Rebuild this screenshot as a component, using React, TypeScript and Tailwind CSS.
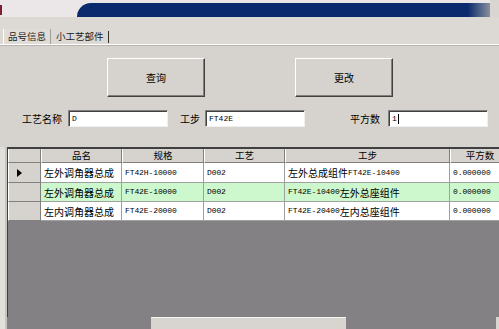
import React from "react";

const CJK = '"Noto Sans CJK SC", "Noto Sans", sans-serif';
const MONO = '"Liberation Mono", "Noto Sans CJK SC", monospace';

function Mix({ parts }: { parts: { t: string; m?: boolean }[] }) {
  return (
    <>
      {parts.map((p, i) =>
        p.m ? (
          <span key={i} className="text-[8px] tracking-[-0.1px]" style={{ fontFamily: MONO }}>
            {p.t}
          </span>
        ) : (
          <span key={i} className="text-[10px]" style={{ fontFamily: CJK }}>
            {p.t}
          </span>
        )
      )}
    </>
  );
}

const cols = "grid grid-cols-[33px_81px_82px_81px_165px_60px]";

type Row = { a: string; b: string; c: string; d: { t: string; m?: boolean }[]; e: string; green?: boolean; cur?: boolean };

const rows: Row[] = [
  { a: "左外调角器总成", b: "FT42H-10000", c: "D002", d: [{ t: "左外总成组件" }, { t: "FT42E-10400", m: true }], e: "0.000000", cur: true },
  { a: "左外调角器总成", b: "FT42E-10000", c: "D002", d: [{ t: "FT42E-10400", m: true }, { t: "左外总座组件" }], e: "0.000000", green: true },
  { a: "左内调角器总成", b: "FT42E-20000", c: "D002", d: [{ t: "FT42E-20400", m: true }, { t: "左内总座组件" }], e: "0.000000" },
];

function Button({ label }: { label: string }) {
  return (
    <div className="w-[98px] h-[39px] border border-t-white border-l-white border-b-[#404040] border-r-[#404040] shadow-[inset_-1px_-1px_0_#808080] bg-[#d6d3ce] flex items-center justify-center text-[10px] text-black" style={{ fontFamily: CJK }}>
      {label}
    </div>
  );
}

function Input({ w, value, cursor }: { w: string; value: string; cursor?: boolean }) {
  return (
    <div className={`${w} h-[17px] bg-white border border-t-[#808080] border-l-[#808080] border-b-[#f0f0f0] border-r-[#f0f0f0] shadow-[inset_1px_1px_0_#404040] flex items-center pl-[3px] text-[8px] text-black`} style={{ fontFamily: MONO }}>
      {value}
      {cursor && <span className="ml-[1px] w-px h-[10px] bg-black" />}
    </div>
  );
}

export default function App() {
  return (
    <div className="w-[499px] h-[329px] bg-[#d6d3ce] overflow-hidden flex flex-col" style={{ fontFamily: CJK }}>
      {/* title bar */}
      <div className="h-[17px] flex bg-[#ebe7e9] shrink-0">
        <div className="w-[77px] relative">
          <div className="absolute left-0 top-[5px] w-[2px] h-[10px] bg-[#7a2030]" />
        </div>
        <div className="mt-[3px] flex-1 bg-[#0b2a6e] rounded-tl-[16px]" />
        <div className="mt-[3px] w-[22px] bg-gradient-to-r from-[#0b2a6e] to-[#8b8f9c]" />
        <div className="w-[9px] bg-[#d9d6d2]" />
      </div>
      {/* tabs */}
      <div className="h-[28px] shrink-0 flex items-end bg-[#dcd9d4] border-b border-b-white shadow-[0_1px_0_#b8b5b0]">
        <div className="ml-[3px] h-[15px] pl-[4px] pr-[4px] flex items-center text-[9.5px] text-[#222] border-l border-l-white border-r border-r-[#a09d98] bg-[#e0ddd8]">
          品号信息
        </div>
        <div className="h-[15px] pl-[5px] pr-[3px] flex items-center text-[9.5px] text-[#222]">
          小工艺部件
          <span className="ml-[4px] w-px h-[12px] bg-[#303030]" />
        </div>
      </div>
      {/* buttons */}
      <div className="flex mt-[13px] shrink-0">
        <div className="ml-[107px]">
          <Button label="查询" />
        </div>
        <div className="ml-[90px]">
          <Button label="更改" />
        </div>
      </div>
      {/* inputs */}
      <div className="flex items-center mt-[13px] h-[17px] shrink-0 text-[10px] text-black">
        <span className="ml-[22px] w-[46px]">工艺名称</span>
        <Input w="w-[100px]" value="D" />
        <span className="ml-[12px] w-[25px]">工步</span>
        <Input w="w-[100px]" value="FT42E" />
        <span className="ml-[45px] w-[38px]">平方数</span>
        <Input w="w-[100px]" value="1" cursor />
      </div>
      {/* grid */}
      <div className="flex-1 flex mt-[20px] border-l-[5px] border-l-[#e2e0da]">
        <div className="w-[2px] bg-[#c8c5c0]" />
        <div className="flex-1 flex flex-col overflow-hidden">
          <div className="h-[170px] shrink-0 bg-[#838183] border-t-2 border-t-[#404040] border-l border-l-[#404040] overflow-hidden">
            <div className={`${cols} h-[14px] bg-[#d6d3ce] text-[9.5px] text-black`}>
              <div className="border-r border-r-[#808080] border-b border-b-[#808080] border-l border-l-white" />
              {["品名", "规格", "工艺", "工步", "平方数"].map((h) => (
                <div key={h} className="border-r border-r-[#808080] border-b border-b-[#808080] border-l border-l-white flex items-center justify-center leading-none">
                  {h}
                </div>
              ))}
            </div>
            {rows.map((r, i) => (
              <div key={i} className={`${cols} ${i === 0 ? "h-[20px]" : "h-[19px]"}`}>
                <div className="bg-[#d6d3ce] border-r border-r-[#808080] border-b border-b-[#808080] border-l border-l-white flex items-center pl-[8px]">
                  {r.cur && (
                    <svg width="5" height="8" viewBox="0 0 5 8">
                      <path d="M0 0 L5 4 L0 8 Z" fill="#000" />
                    </svg>
                  )}
                </div>
                {[
                  <Mix parts={[{ t: r.a }]} />,
                  <Mix parts={[{ t: r.b, m: true }]} />,
                  <Mix parts={[{ t: r.c, m: true }]} />,
                  <Mix parts={r.d} />,
                  <Mix parts={[{ t: r.e, m: true }]} />,
                ].map((c, j) => (
                  <div key={j} className={`${r.green ? "bg-[#cdf7cd]" : "bg-white"} border-r border-r-[#a0a0a0] border-b border-b-[#a0a0a0] flex items-center pl-[3px] text-black whitespace-nowrap overflow-hidden`}>
                    {c}
                  </div>
                ))}
              </div>
            ))}
          </div>
          <div className="flex-1 flex">
            <div className="w-[144px] bg-[#838183]" />
            <div className="w-[195px] bg-[#d8d5d0] border-t border-t-[#f4f4f0]" />
            <div className="w-[150px] bg-[#838183]" />
            <div className="flex-1 bg-[#d8d5d0]" />
          </div>
        </div>
      </div>
    </div>
  );
}
